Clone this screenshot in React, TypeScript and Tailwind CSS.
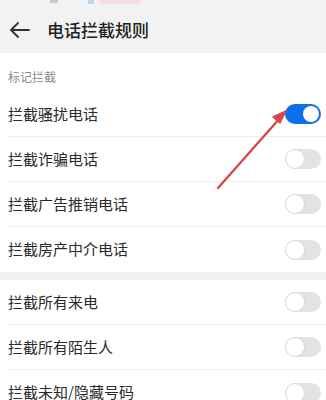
const rowsA = [
  { label: "拦截骚扰电话", on: true },
  { label: "拦截诈骗电话", on: false },
  { label: "拦截广告推销电话", on: false },
  { label: "拦截房产中介电话", on: false },
];

const rowsB = [
  { label: "拦截所有来电", on: false },
  { label: "拦截所有陌生人", on: false },
  { label: "拦截未知/隐藏号码", on: false },
];

function Toggle({ on }: { on: boolean }) {
  return on ? (
    <div className="flex h-[20px] w-[36px] items-center justify-end rounded-full bg-[#0b6fe8] px-[2px]">
      <div className="h-[16px] w-[16px] rounded-full bg-white" />
    </div>
  ) : (
    <div className="flex h-[20px] w-[36px] items-center rounded-full bg-[#e3e3e3]">
      <div className="h-[20px] w-[20px] rounded-full border border-[#d8d8d8] bg-white" />
    </div>
  );
}

function Row({ label, on, last }: { label: string; on: boolean; last?: boolean }) {
  return (
    <div className="pl-[8px]">
      <div className={"flex h-[45px] items-center justify-between pr-[5px] " + (last ? "" : "border-b border-[#ececec]")}>
        <span className="text-[15px] text-[#2a2a2a]">{label}</span>
        <Toggle on={on} />
      </div>
    </div>
  );
}

export default function App() {
  return (
    <div
      className="relative h-[400px] w-[326px] overflow-hidden bg-white"
      style={{ fontFamily: '"Noto Sans CJK SC", "Noto Sans", sans-serif' }}
    >
      {/* Header */}
      <div className="h-[53px] bg-[#f2f2f2]">
        <div className="flex h-[6px] items-start gap-[30px] pl-[50px]">
          <div className="h-[3px] w-[8px] bg-[#c8c8c8]" />
          <div className="flex gap-[6px]">
            <div className="h-[4px] w-[6px] bg-[#bcd6f2]" />
            <div className="h-[4px] w-[40px] bg-[#f5dede]" />
          </div>
        </div>
        <div className="flex h-[47px] items-center">
          <svg width="22" height="18" viewBox="0 0 22 18" className="ml-[9px]" fill="none" stroke="#333" strokeWidth="1.8" strokeLinecap="round" strokeLinejoin="round">
            <path d="M20 9H2M9 2L2 9l7 7" />
          </svg>
          <span className="ml-[16px] text-[17px] font-medium text-[#222]">电话拦截规则</span>
        </div>
      </div>

      {/* Section label */}
      <div className="flex h-[39px] items-center pl-[8px] pt-[8px] text-[12px] text-[#8a8a8a]">标记拦截</div>

      {rowsA.map((r, i) => (
        <Row key={r.label} label={r.label} on={r.on} last={i === rowsA.length - 1} />
      ))}

      <div className="h-[8px] bg-[#f0f0f0]" />

      {rowsB.map((r, i) => (
        <Row key={r.label} label={r.label} on={r.on} last={i === rowsB.length - 1} />
      ))}

      {/* Annotation arrow */}
      <svg className="absolute left-0 top-0" width="326" height="400" viewBox="0 0 326 400" fill="none">
        <path d="M218 188L280 118" stroke="#d9474a" strokeWidth="2.4" strokeLinecap="round" />
        <path d="M286 111L273 117L280 123Z" fill="#d9474a" stroke="#d9474a" strokeWidth="1.5" strokeLinejoin="round" />
      </svg>
    </div>
  );
}
